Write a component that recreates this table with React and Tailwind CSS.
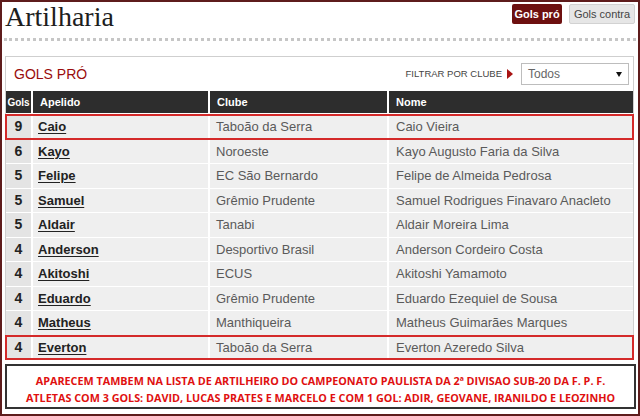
import React from "react";

const rows = [
  { gols: 9, apelido: "Caio", clube: "Taboão da Serra", nome: "Caio Vieira", hl: true },
  { gols: 6, apelido: "Kayo", clube: "Noroeste", nome: "Kayo Augusto Faria da Silva" },
  { gols: 5, apelido: "Felipe", clube: "EC São Bernardo", nome: "Felipe de Almeida Pedrosa" },
  { gols: 5, apelido: "Samuel", clube: "Grêmio Prudente", nome: "Samuel Rodrigues Finavaro Anacleto" },
  { gols: 5, apelido: "Aldair", clube: "Tanabi", nome: "Aldair Moreira Lima" },
  { gols: 4, apelido: "Anderson", clube: "Desportivo Brasil", nome: "Anderson Cordeiro Costa" },
  { gols: 4, apelido: "Akitoshi", clube: "ECUS", nome: "Akitoshi Yamamoto" },
  { gols: 4, apelido: "Eduardo", clube: "Grêmio Prudente", nome: "Eduardo Ezequiel de Sousa" },
  { gols: 4, apelido: "Matheus", clube: "Manthiqueira", nome: "Matheus Guimarães Marques" },
  { gols: 4, apelido: "Everton", clube: "Taboão da Serra", nome: "Everton Azeredo Silva", hl: true },
];

const cols = "grid grid-cols-[25px_175px_177px_1fr] gap-x-[2px]";

export default function App() {
  return (
    <div className="w-[640px] h-[416px] overflow-hidden bg-white border-2 border-[#5e1c1c] font-['Liberation_Sans',Arial,sans-serif]">
      {/* Title bar */}
      <div className="flex items-start justify-between pl-[3px] pr-[3px] pt-[1px]">
        <h1 className="font-['Liberation_Serif',serif] text-[28px] leading-[28px] text-[#1e1e1e]">Artilharia</h1>
        <div className="flex gap-[7px] mt-[1px]">
          <button className="w-[50px] h-[20px] bg-[#6d1010] rounded-[2px] text-white text-[11px] font-bold">Gols pró</button>
          <button className="w-[66px] h-[20px] bg-[#e6e6e6] border border-[#d2d2d2] rounded-[2px] text-[#444] text-[11px]">Gols contra</button>
        </div>
      </div>
      <div className="mx-[2px] mt-[7px] border-b-[3px] border-dotted border-[#c6c6c6]"></div>

      {/* Panel */}
      <div className="ml-[3px] mr-[4px] mt-[15px] border border-[#cfcfcf]">
        <div className="h-[34px] flex items-center justify-between pl-[8px] pr-[4px]">
          <h2 className="text-[14px] text-[#9a0c0c]">GOLS PRÓ</h2>
          <div className="flex items-center">
            <span className="text-[9.5px] text-[#444]">FILTRAR POR CLUBE</span>
            <span className="ml-[5px] w-0 h-0 border-y-[5px] border-y-transparent border-l-[6px] border-l-[#a81414]"></span>
            <div className="ml-[8px] w-[108px] h-[22px] border border-[#bdbdbd] bg-white flex items-center justify-between pl-[6px] pr-[6px]">
              <span className="text-[12px] text-[#666]">Todos</span>
              <span className="w-0 h-0 border-x-[3px] border-x-transparent border-t-[5px] border-t-[#111]"></span>
            </div>
          </div>
        </div>

        {/* Table header */}
        <div className={`${cols} h-[22px] mb-[2px] text-white font-bold`}>
          <div className="bg-[#2d2d2d] flex items-center justify-center text-[10px]">Gols</div>
          <div className="bg-[#2d2d2d] flex items-center pl-[7px] text-[11px]">Apelido</div>
          <div className="bg-[#2d2d2d] flex items-center pl-[7px] text-[11px]">Clube</div>
          <div className="bg-[#2d2d2d] flex items-center pl-[7px] text-[11px]">Nome</div>
        </div>

        {/* Table rows */}
        <div className="flex flex-col gap-y-[1px]">
          {rows.map((r) => (
            <div
              key={r.apelido}
              className={`${cols} h-[23.5px] ${r.hl ? "outline-2 outline-[#d42a2a] -outline-offset-1" : ""}`}
            >
              <div className="bg-[#e4e4e4] flex items-center justify-center text-[14px] font-bold text-[#222]">{r.gols}</div>
              <div className="bg-[#efefef] flex items-center pl-[5px] text-[13px] font-bold text-[#222] underline underline-offset-2">{r.apelido}</div>
              <div className="bg-[#efefef] flex items-center pl-[6px] text-[13px] text-[#5a5a5a]">{r.clube}</div>
              <div className="bg-[#efefef] flex items-center pl-[7px] text-[13px] text-[#5a5a5a]">{r.nome}</div>
            </div>
          ))}
        </div>
      </div>

      {/* Notice */}
      <div className="ml-[3px] mr-[2px] mt-[4px] h-[45px] border-2 border-[#333] bg-white flex flex-col items-center justify-center pt-[4px] font-['Open_Sans',sans-serif] font-bold text-[10.8px] leading-[17px] text-[#e01010] whitespace-nowrap">
        <p>APARECEM TAMBEM NA LISTA DE ARTILHEIRO DO CAMPEONATO PAULISTA DA 2ª DIVISAO SUB-20 DA F. P. F.</p>
        <p>ATLETAS COM 3 GOLS: DAVID, LUCAS PRATES E MARCELO E COM 1 GOL: ADIR, GEOVANE, IRANILDO E LEOZINHO</p>
      </div>
    </div>
  );
}
